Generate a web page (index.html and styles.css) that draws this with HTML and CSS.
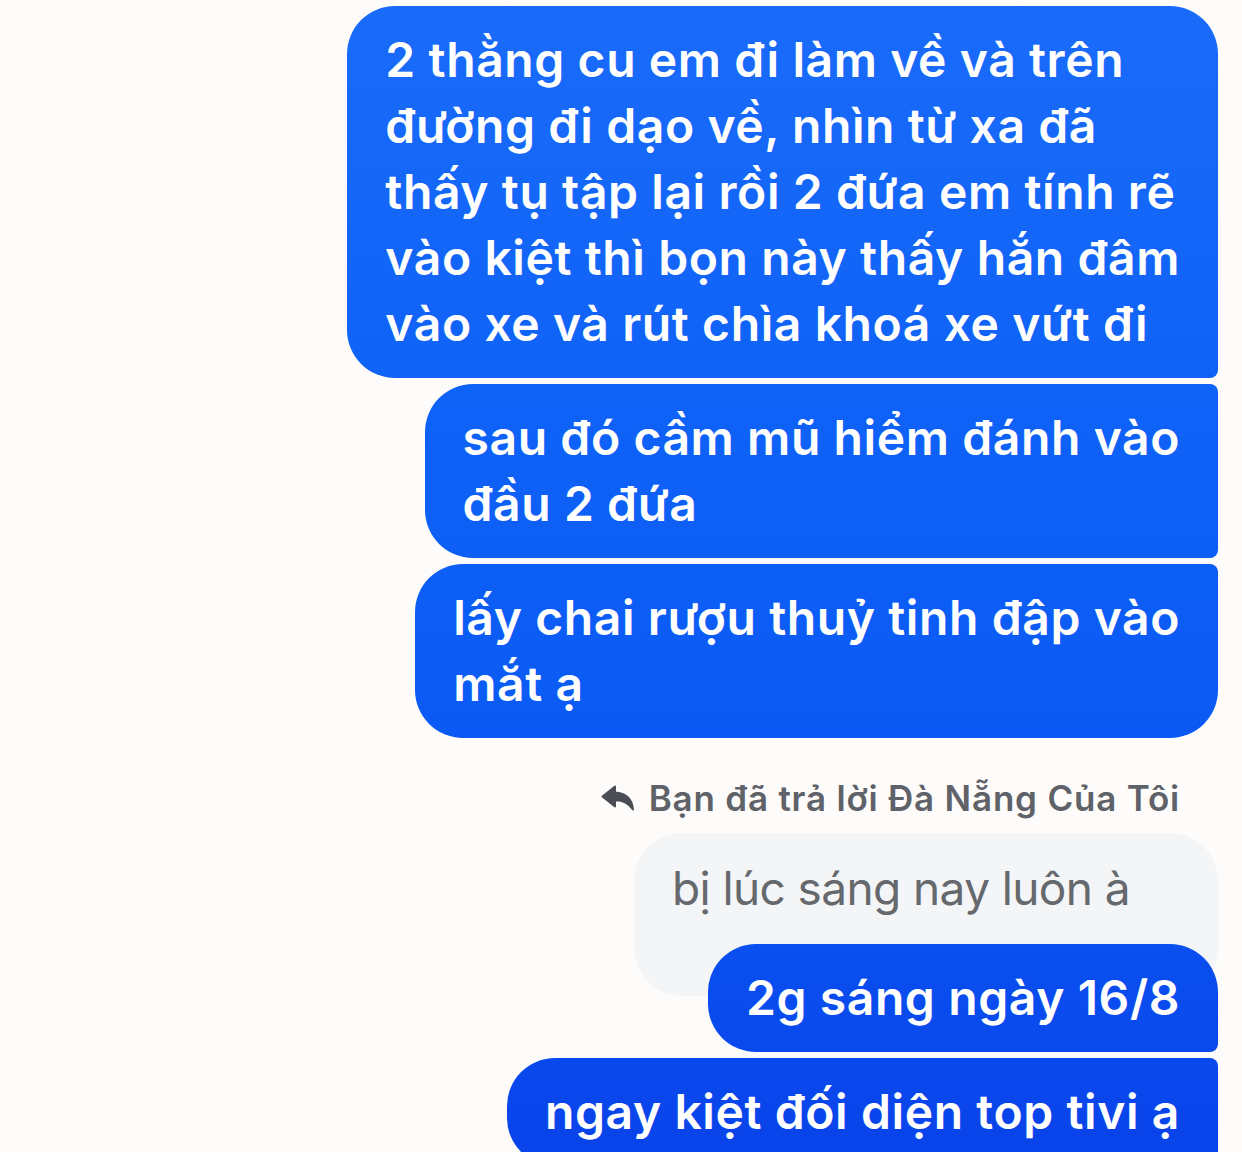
FILE: index.html
```html
<!DOCTYPE html>
<html lang="vi">
<head>
<meta charset="utf-8">
<title>Chat</title>
<link rel="stylesheet" href="styles.css">
</head>
<body>
<div class="chat">
  <div class="bubble out first">2 thằng cu em đi làm về và trên<br>đường đi dạo về, nhìn từ xa đã<br>thấy tụ tập lại rồi 2 đứa em tính rẽ<br>vào kiệt thì bọn này thấy hắn đâm<br>vào xe và rút chìa khoá xe vứt đi</div>
  <div class="bubble out mid">sau đó cầm mũ hiểm đánh vào<br>đầu 2 đứa</div>
  <div class="bubble out last">lấy chai rượu thuỷ tinh đập vào<br>mắt ạ</div>

  <div class="reply-label">
    <svg class="reply-icon" viewBox="0 0 34 28" width="34" height="28" aria-hidden="true">
      <path d="M14 2.5 L1.5 12.5 L14 22.5 L14 16.2 C22 16 27.5 18.8 32 25.5 C31 15.5 25 9.2 14 8.6 Z" fill="#4a4d53" stroke="#4a4d53" stroke-width="2" stroke-linejoin="round"/>
    </svg>
    <span>Bạn đã trả lời Đà Nẵng Của Tôi</span>
  </div>
  <div class="bubble quoted">bị lúc sáng nay luôn à</div>
  <div class="bubble out first over">2g sáng ngày 16/8</div>
  <div class="bubble out mid">ngay kiệt đối diện top tivi ạ</div>
</div>
</body>
</html>
```

FILE: styles.css
```css
html, body {
  margin: 0;
  padding: 0;
  background: #fdfcfa;
}

body {
  font-family: Inter, "Noto Sans", "Liberation Sans", sans-serif;
  -webkit-font-smoothing: antialiased;
}

.chat {
  display: flex;
  flex-direction: column;
  align-items: flex-end;
  padding: 6px 24px 0 0;
  gap: 6px;
}

.bubble {
  font-size: 48px;
  font-weight: 600;
  line-height: 66px;
  padding: 21px 38px 21px 38px;
  border-radius: 48px;
  white-space: nowrap;
  letter-spacing: 0.6px;
}

.out {
  color: #ffffff;
  background: linear-gradient(180deg, #1a6bfa 0%, #0f62f7 35%, #0b5bf5 60%, #0a4ff0 82%, #0943ea 100%);
  background-attachment: fixed;
}

.out.first {
  border-radius: 48px 48px 8px 48px;
}

.out.mid {
  border-radius: 48px 8px 8px 48px;
}

.out.last {
  border-radius: 48px 8px 48px 48px;
}

.over {
  position: relative;
  margin-top: -58px;
}

.reply-label {
  display: flex;
  align-items: center;
  gap: 14px;
  margin-top: 29px;
  padding-right: 38px;
  color: #5f6268;
  font-size: 35px;
  font-weight: 600;
  letter-spacing: 0.8px;
  line-height: 44px;
  height: 50px;
}

.reply-icon {
  display: block;
}

.quoted {
  margin-top: 4px;
  background: #f4f5f6;
  color: #65686d;
  font-size: 46px;
  font-weight: 400;
  letter-spacing: -0.6px;
  padding: 22px 88px 75px 38px;
  border-radius: 48px;
}
```
